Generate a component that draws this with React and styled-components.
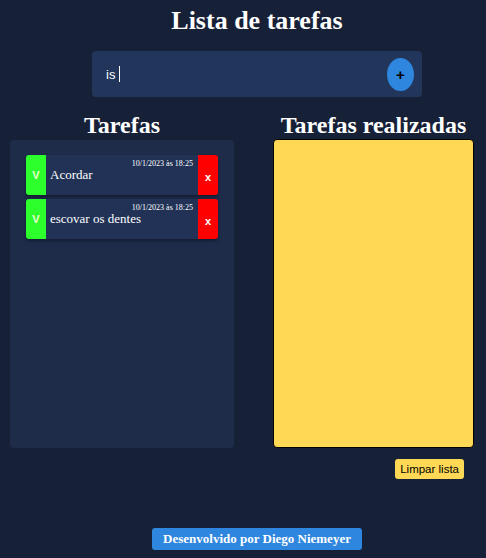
import styled, { createGlobalStyle } from "styled-components";

const GlobalStyle = createGlobalStyle`
  body {
    margin: 0;
    background: #162037;
    font-family: "Liberation Serif", "Times New Roman", serif;
    color: #fff;
    overflow: hidden;
  }
`;

const tasks = [
  { id: 1, text: "Acordar", date: "10/1/2023 às 18:25" },
  { id: 2, text: "escovar os dentes", date: "10/1/2023 às 18:25" },
];

function App() {
  return (
    <Page>
      <GlobalStyle />
      <Centered>
        <Title>Lista de tarefas</Title>
        <InputBar>
          <InputText>
            is
            <Caret />
          </InputText>
          <AddButton>+</AddButton>
        </InputBar>
      </Centered>
      <Columns>
        <Column $width={224}>
          <Heading>Tarefas</Heading>
          <TaskPanel>
            {tasks.map((t) => (
              <TaskCard key={t.id}>
                <DoneButton>V</DoneButton>
                <TaskBody>
                  <TaskDate>{t.date}</TaskDate>
                  <TaskText>{t.text}</TaskText>
                </TaskBody>
                <DeleteButton>x</DeleteButton>
              </TaskCard>
            ))}
          </TaskPanel>
        </Column>
        <Column $width={201}>
          <Heading>Tarefas realizadas</Heading>
          <DonePanel />
          <ClearButton>Limpar lista</ClearButton>
        </Column>
      </Columns>
      <Centered>
        <Credit>Desenvolvido por Diego Niemeyer</Credit>
      </Centered>
    </Page>
  );
}

export default App;

const Page = styled.div`
  display: flex;
  flex-direction: column;
`;

const Centered = styled.div`
  padding-left: 28px;
  display: flex;
  flex-direction: column;
  align-items: center;
`;

const Title = styled.h1`
  margin: 6px 0 0;
  font-size: 26px;
  line-height: 30px;
  font-weight: bold;
`;

const InputBar = styled.div`
  margin-top: 15px;
  width: 330px;
  height: 46px;
  box-sizing: border-box;
  background: #22355a;
  border-radius: 4px;
  display: flex;
  align-items: center;
  justify-content: space-between;
  padding: 0 8px 0 14px;
`;

const InputText = styled.div`
  font-family: "Liberation Sans", Arial, sans-serif;
  font-size: 13px;
  color: #fff;
  display: flex;
  align-items: center;
`;

const Caret = styled.span`
  display: inline-block;
  width: 1px;
  height: 16px;
  margin-left: 4px;
  background: #fff;
`;

const AddButton = styled.div`
  width: 27px;
  height: 33px;
  border-radius: 50%;
  background: #2e86de;
  color: #000;
  font-family: "Liberation Sans", Arial, sans-serif;
  font-weight: bold;
  font-size: 15px;
  display: flex;
  align-items: center;
  justify-content: center;
`;

const Columns = styled.div`
  display: flex;
  gap: 39px;
  padding-left: 10px;
  margin-top: 15px;
`;

const Column = styled.div`
  width: ${(p) => p.$width}px;
  display: flex;
  flex-direction: column;
  align-items: center;
`;

const Heading = styled.h2`
  margin: 0;
  font-size: 24px;
  line-height: 26px;
  font-weight: bold;
`;

const TaskPanel = styled.div`
  align-self: stretch;
  margin-top: 2px;
  height: 308px;
  background: #1e2c4a;
  border-radius: 4px;
  padding: 15px 16px;
  box-sizing: border-box;
  display: flex;
  flex-direction: column;
  gap: 4px;
`;

const TaskCard = styled.div`
  height: 40px;
  display: flex;
  background: #213256;
  border-radius: 3px;
  box-shadow: 0 2px 3px rgba(0, 0, 0, 0.35);
`;

const SideButton = styled.div`
  width: 20px;
  flex-shrink: 0;
  display: flex;
  align-items: center;
  justify-content: center;
  font-family: "Liberation Sans", Arial, sans-serif;
  font-weight: bold;
  font-size: 11px;
  color: #fff;
`;

const DoneButton = styled(SideButton)`
  background: #2cff2c;
  border-radius: 3px 0 0 3px;
  color: #e8ffd0;
`;

const DeleteButton = styled(SideButton)`
  background: #ff0000;
  border-radius: 0 3px 3px 0;
  padding-top: 4px;
  box-sizing: border-box;
`;

const TaskBody = styled.div`
  flex: 1;
  display: flex;
  flex-direction: column;
  padding: 4px 5px 0 4px;
`;

const TaskDate = styled.div`
  align-self: flex-end;
  font-size: 8px;
  line-height: 9px;
`;

const TaskText = styled.div`
  font-size: 13px;
  line-height: 15px;
  margin-top: -1px;
`;

const DonePanel = styled.div`
  align-self: stretch;
  margin-top: 1px;
  height: 309px;
  box-sizing: border-box;
  background: #ffd955;
  border: 1px solid #000;
  border-radius: 4px;
`;

const ClearButton = styled.div`
  align-self: flex-end;
  margin: 11px 10px 0 0;
  height: 20px;
  padding: 0 5px;
  display: flex;
  align-items: center;
  background: #ffd955;
  border-radius: 3px;
  color: #000;
  font-family: "Liberation Sans", Arial, sans-serif;
  font-size: 11.5px;
`;

const Credit = styled.div`
  margin-top: 49px;
  height: 22px;
  padding: 0 11px;
  display: flex;
  align-items: center;
  background: #2e86de;
  border-radius: 3px;
  color: #fff;
  font-weight: bold;
  font-size: 13px;
`;
